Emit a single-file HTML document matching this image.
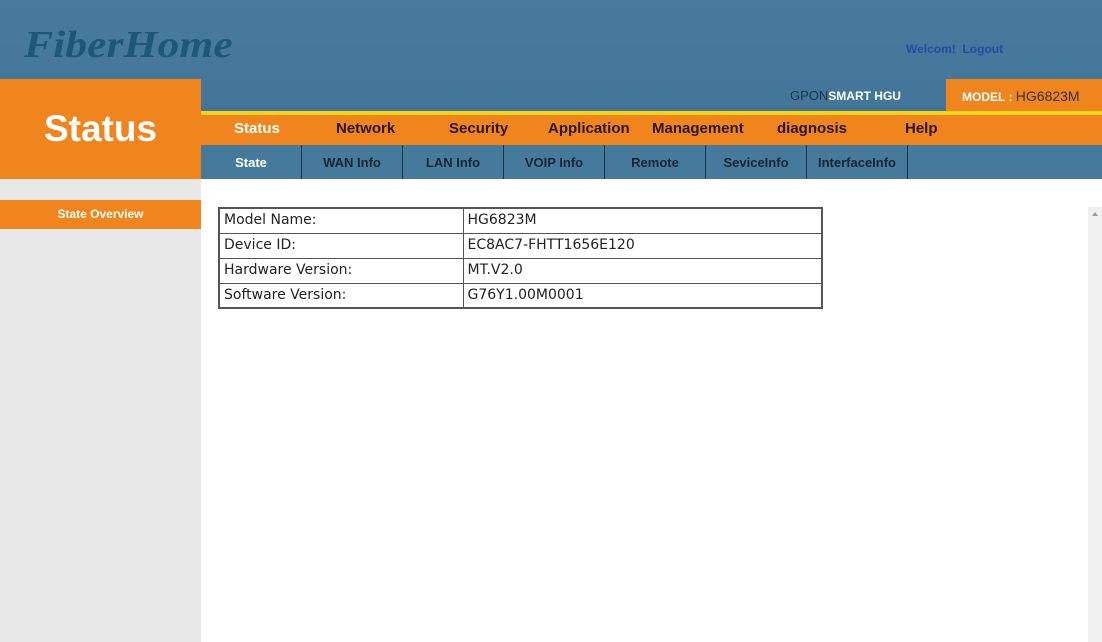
<!DOCTYPE html>
<html><head><meta charset="utf-8"><style>
*{margin:0;padding:0;box-sizing:border-box}
body{width:1102px;height:642px;overflow:hidden;background:#fff;font-family:"DejaVu Sans","Liberation Sans",sans-serif;position:relative}
.a{position:absolute}
#hdr{left:0;top:0;width:1102px;height:112px;background:linear-gradient(#477b9d,#437598)}
#logo{left:24px;top:20px;font-family:"Liberation Serif",serif;font-style:italic;font-weight:bold;font-size:38px;color:#1d5878;transform:scaleX(1.15);transform-origin:0 0;line-height:50px}
#wel{left:906px;top:42px;font:bold 12px "Liberation Sans",sans-serif;color:#1f4ea8}
#left{left:0;top:79px;width:201px;height:100px;background:#ef851c;color:#fff;font:bold 37px "Liberation Sans",sans-serif;text-align:center;line-height:100px}
#gpon{left:790px;top:88px;font:13px "Liberation Sans",sans-serif;color:#1a3550}
#gpon b{color:#fff;font-size:12px}
#model{left:946px;top:79px;width:156px;height:33px;background:#ef851c;font:14px "Liberation Sans",sans-serif;line-height:34px;color:#333;padding-left:16px}
#model b{color:#fff;font-size:12px}
#yl{left:201px;top:111px;width:901px;height:4px;background:#f4d51a}
#nav{left:201px;top:115px;width:901px;height:30px;background:#ef851c}
#nav span{position:absolute;top:5px;font:bold 15px "Liberation Sans",sans-serif;color:#2a1606}
#sub{left:201px;top:145px;width:901px;height:34px;background:#457a9c}
#sub span{position:absolute;top:0;height:34px;width:101px;border-right:1px solid #17324a;text-align:center;font:bold 13px "Liberation Sans",sans-serif;line-height:35px;color:#1a2530}
#side{left:0;top:179px;width:201px;height:463px;background:#e8e8e8}
#ov{left:0;top:200px;width:201px;height:29px;background:#ef851c;color:#fff;font:bold 12px "Liberation Sans",sans-serif;text-align:center;line-height:29px}
table{position:absolute;left:218px;top:207px;width:605px;border-collapse:collapse;border:2px solid #555}
td{border:1px solid #555;height:25px;font-size:14px;color:#222;padding-left:4px;line-height:23px}
#sb{left:1088px;top:207px;width:14px;height:435px;background:#f0f0f0}
#tri{left:1092px;top:212px;width:0;height:0;border-left:3px solid transparent;border-right:3px solid transparent;border-bottom:4px solid #999}
</style></head><body>
<div class="a" id="hdr"></div>
<div class="a" id="logo">FiberHome</div>
<div class="a" id="wel">Welcom!&nbsp; Logout</div>
<div class="a" id="left">Status</div>
<div class="a" id="gpon">GPON<b>SMART HGU</b></div>
<div class="a" id="model"><b>MODEL : </b>HG6823M</div>
<div class="a" id="yl"></div>
<div class="a" id="nav">
<span style="left:33px;color:#fff">Status</span>
<span style="left:135px">Network</span>
<span style="left:248px">Security</span>
<span style="left:347px">Application</span>
<span style="left:451px">Management</span>
<span style="left:576px">diagnosis</span>
<span style="left:704px">Help</span>
</div>
<div class="a" id="sub">
<span style="left:0;color:#fff">State</span>
<span style="left:101px">WAN Info</span>
<span style="left:202px">LAN Info</span>
<span style="left:303px">VOIP Info</span>
<span style="left:404px">Remote</span>
<span style="left:505px">SeviceInfo</span>
<span style="left:606px">InterfaceInfo</span>
</div>
<div class="a" id="side"></div>
<div class="a" id="ov">State Overview</div>
<table>
<tr><td style="width:244px">Model Name:</td><td>HG6823M</td></tr>
<tr><td>Device ID:</td><td>EC8AC7-FHTT1656E120</td></tr>
<tr><td>Hardware Version:</td><td>MT.V2.0</td></tr>
<tr><td>Software Version:</td><td>G76Y1.00M0001</td></tr>
</table>
<div class="a" id="sb"></div>
<div class="a" id="tri"></div>
</body></html>
